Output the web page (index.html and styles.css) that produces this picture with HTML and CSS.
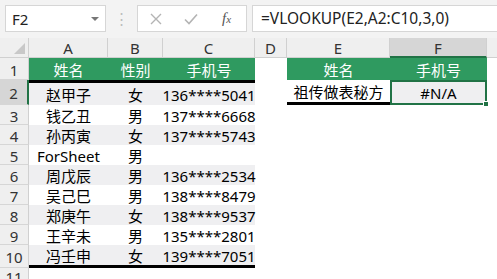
FILE: index.html
```html
<!DOCTYPE html>
<html lang="zh-CN">
<head>
<meta charset="UTF-8">
<title>VLOOKUP</title>
<link rel="stylesheet" href="styles.css">
</head>
<body>
<div class="bar">
  <div class="namebox"><span>F2</span><span class="caret"></span></div>
  <div class="grip">⋮</div>
  <div class="fxbox">
    <svg width="12" height="12" viewBox="0 0 12 12"><path d="M1 1L11 11M11 1L1 11" stroke="#b4b4b4" stroke-width="1.4" fill="none"/></svg>
    <svg width="14" height="12" viewBox="0 0 14 12"><path d="M1 6.5L5 10.5L13 1.5" stroke="#b4b4b4" stroke-width="1.6" fill="none"/></svg>
    <span class="fx">f<small>x</small></span>
  </div>
  <div class="formula">=VLOOKUP(E2,A2:C10,3,0)</div>
</div>
<div class="sheet">
  <div class="corner"><span class="tri"></span></div>
  <div class="ch">A</div><div class="ch">B</div><div class="ch">C</div><div class="ch">D</div><div class="ch">E</div><div class="ch sel">F</div><div class="ch last"></div>

  <div class="rh">1</div>
  <div class="c hd">姓名</div><div class="c hd">性别</div><div class="c hd">手机号</div><div class="c"></div>
  <div class="c hd">姓名</div><div class="c hd">手机号</div><div class="c"></div>

  <div class="rh sel">2</div>
  <div class="c top band">赵甲子</div><div class="c top band">女</div><div class="c top band">136****5041</div><div class="c"></div>
  <div class="c under">祖传做表秘方</div><div class="c active band">#N/A<span class="handle"></span></div><div class="c"></div>

  <div class="rh">3</div>
  <div class="c">钱乙丑</div><div class="c">男</div><div class="c">137****6668</div><div class="c"></div><div class="c"></div><div class="c"></div><div class="c"></div>

  <div class="rh">4</div>
  <div class="c band">孙丙寅</div><div class="c band">女</div><div class="c band">137****5743</div><div class="c"></div><div class="c"></div><div class="c"></div><div class="c"></div>

  <div class="rh">5</div>
  <div class="c left">ForSheet</div><div class="c">男</div><div class="c"></div><div class="c"></div><div class="c"></div><div class="c"></div><div class="c"></div>

  <div class="rh">6</div>
  <div class="c band">周戊辰</div><div class="c band">男</div><div class="c band">136****2534</div><div class="c"></div><div class="c"></div><div class="c"></div><div class="c"></div>

  <div class="rh">7</div>
  <div class="c">吴己巳</div><div class="c">男</div><div class="c">138****8479</div><div class="c"></div><div class="c"></div><div class="c"></div><div class="c"></div>

  <div class="rh">8</div>
  <div class="c band">郑庚午</div><div class="c band">女</div><div class="c band">138****9537</div><div class="c"></div><div class="c"></div><div class="c"></div><div class="c"></div>

  <div class="rh">9</div>
  <div class="c">王辛未</div><div class="c">男</div><div class="c">135****2801</div><div class="c"></div><div class="c"></div><div class="c"></div><div class="c"></div>

  <div class="rh">10</div>
  <div class="c band bottom">冯壬申</div><div class="c band bottom">女</div><div class="c band bottom">139****7051</div><div class="c"></div><div class="c"></div><div class="c"></div><div class="c"></div>

  <div class="rh cut">11</div>
  <div class="c"></div><div class="c"></div><div class="c"></div><div class="c"></div><div class="c"></div><div class="c"></div><div class="c"></div>
</div>
</body>
</html>
```
FILE: styles.css
```css
* { box-sizing: border-box; }
body { margin: 0; background: #fff; font-family: "Noto Sans", "Noto Sans CJK SC", sans-serif; color: #000; overflow: hidden; }

.bar { height: 38px; background: #f3f3f3; display: flex; align-items: flex-start; padding-top: 5px; padding-left: 5px; }
.namebox { width: 101px; height: 27px; background: #fff; border: 1px solid #d6d6d6; display: flex; align-items: center; justify-content: space-between; padding: 0 6px 0 6px; font-size: 15px; color: #222; }
.caret { width: 0; height: 0; border-left: 4px solid transparent; border-right: 4px solid transparent; border-top: 4px solid #777; }
.grip { width: 31px; text-align: center; color: #bdbdbd; font-size: 15px; line-height: 27px; }
.fxbox { width: 110px; height: 27px; background: #fff; border: 1px solid #d6d6d6; display: flex; align-items: center; padding-left: 12px; gap: 22px; }
.fx { font-family: "Liberation Serif", serif; font-style: italic; font-size: 15px; color: #555; margin-left: 2px; }
.fx small { font-size: 11px; }
.formula { flex: 1; height: 27px; margin-left: 5px; background: #fff; border: 1px solid #d6d6d6; border-right: none; padding-left: 8px; font-size: 15.5px; line-height: 25px; color: #222; }

.sheet { display: grid; grid-template-columns: 29px 79px 55px 92px 32px 103px 97px 1fr; grid-template-rows: 20px 22px 25px repeat(7, 20px) 23px 11px; }
.corner { background: #efefef; border-right: 1px solid #d0d0d0; border-bottom: 1px solid #d0d0d0; position: relative; }
.tri { position: absolute; right: 3px; bottom: 3px; width: 0; height: 0; border-left: 11px solid transparent; border-bottom: 11px solid #c8c8c8; }
.ch { background: #efefef; border-right: 1px solid #d0d0d0; border-bottom: 1px solid #d0d0d0; text-align: center; font-size: 15px; line-height: 20px; color: #333; }
.ch.sel { background: #d6d6d6; border-bottom: 2px solid #217346; }
.ch.last { border-right: none; }
.rh { background: #efefef; border-right: 1px solid #d0d0d0; border-bottom: 1px solid #d6d6d6; display: flex; align-items: center; justify-content: center; font-size: 15px; color: #333; padding-top: 2px; }
.rh.sel { background: #d6d6d6; border-right: 2px solid #217346; }
.rh.cut { align-items: flex-start; padding-top: 0; line-height: 18px; overflow: hidden; border-bottom: none; }

.c { display: flex; align-items: center; justify-content: center; font-size: 15px; white-space: nowrap; padding-top: 1px; }
.c.left { justify-content: flex-start; padding-left: 8px; }
.hd { background: #2f9a60; color: #fff; }
.band { background: #efeff1; }
.top { border-top: 3px solid #000; }
.bottom { border-bottom: 3px solid #000; }
.under { border-bottom: 3px solid #000; }
.active { border: 2px solid #217346; position: relative; }
.handle { position: absolute; right: -4px; bottom: -4px; width: 6px; height: 6px; background: #217346; border: 1px solid #fff; }
```
